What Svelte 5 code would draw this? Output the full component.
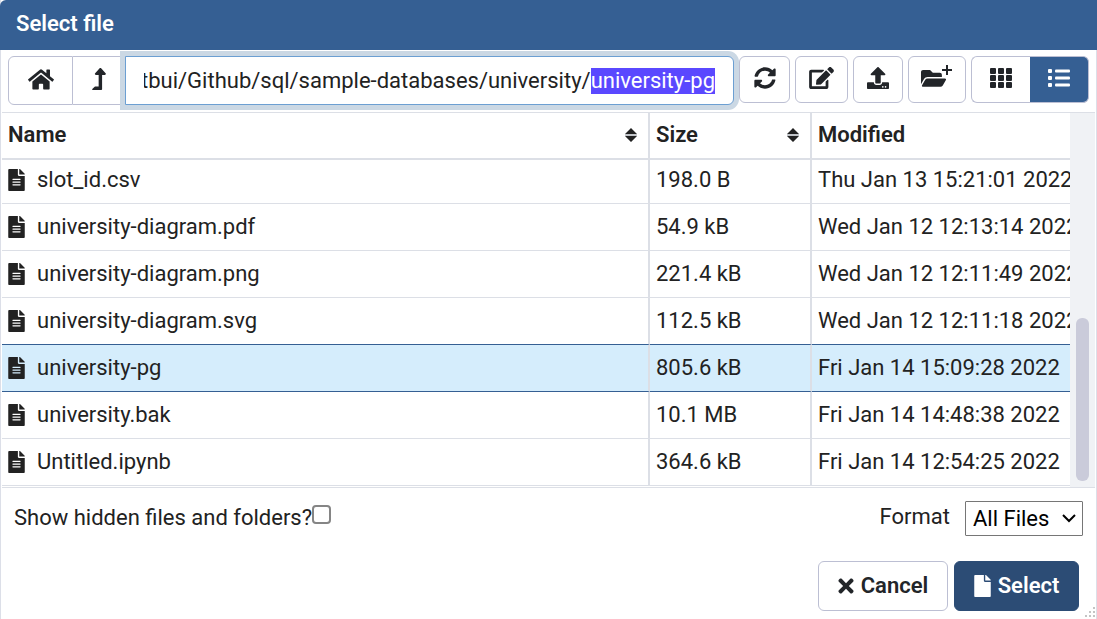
<script>
  import { onMount } from 'svelte';

  const files = [
    { name: 'slot_id.csv', size: '198.0 B', modified: 'Thu Jan 13 15:21:01 2022' },
    { name: 'university-diagram.pdf', size: '54.9 kB', modified: 'Wed Jan 12 12:13:14 2022' },
    { name: 'university-diagram.png', size: '221.4 kB', modified: 'Wed Jan 12 12:11:49 2022' },
    { name: 'university-diagram.svg', size: '112.5 kB', modified: 'Wed Jan 12 12:11:18 2022' },
    { name: 'university-pg', size: '805.6 kB', modified: 'Fri Jan 14 15:09:28 2022' },
    { name: 'university.bak', size: '10.1 MB', modified: 'Fri Jan 14 14:48:38 2022' },
    { name: 'Untitled.ipynb', size: '364.6 kB', modified: 'Fri Jan 14 12:54:25 2022' }
  ];
  const folder = 'tbui/Github/sql/sample-databases/university/';
  const syncArrow =
    'M370.72 133.28C339.458 104.008 298.888 87.962 255.848 88c-77.458.068-144.328 53.178-162.791 126.85-1.344 5.363-6.122 9.15-11.651 9.15H24.103c-7.498 0-13.194-6.807-11.807-14.176C33.933 94.924 134.813 8 256 8c66.448 0 126.791 26.136 171.315 68.685L463.03 40.97C478.149 25.851 504 36.559 504 57.941V192c0 13.255-10.745 24-24 24H345.941c-21.382 0-32.09-25.851-16.971-40.971l41.75-41.749z';

  let selected = $state('university-pg');
  let path = $state(folder + 'university-pg');
  let showHidden = $state(false);
  let pathInput;
  let list;

  onMount(() => {
    pathInput.focus();
    pathInput.setSelectionRange(folder.length, path.length);
    pathInput.scrollLeft = pathInput.scrollWidth;
    list.scrollTop = list.scrollHeight;
  });

  function pick(name) {
    selected = name;
    path = folder + name;
  }
</script>

{#snippet sorter()}
  <svg class="sorter" viewBox="0 0 12 14" aria-hidden="true"><path d="M6 0 12 6H0zM6 14 0 8h12z" /><path class="mid" d="M0 6h12v2H0z" /></svg>
{/snippet}

<div class="dialog">
  <header>Select file</header>

  <div class="toolbar">
    <div class="location">
      <button class="home" aria-label="Home">
        <svg width="26" height="23" viewBox="0 0 576 512"><path d="M280.37 148.26L96 300.11V464a16 16 0 0 0 16 16l112.06-.29a16 16 0 0 0 15.92-16V368a16 16 0 0 1 16-16h64a16 16 0 0 1 16 16v95.64a16 16 0 0 0 16 16.05L464 480a16 16 0 0 0 16-16V300L295.67 148.26a12.19 12.19 0 0 0-15.3 0zM571.6 251.47L488 182.56V44.05a12 12 0 0 0-12-12h-56a12 12 0 0 0-12 12v72.61L318.47 43a48 48 0 0 0-61 0L4.34 251.47a12 12 0 0 0-1.6 16.9l25.5 31A12 12 0 0 0 45.15 301l235.22-193.74a12.19 12.19 0 0 1 15.3 0L530.9 301a12 12 0 0 0 16.9-1.6l25.5-31a12 12 0 0 0-1.7-16.93z" /></svg>
      </button>
      <button class="up" aria-label="Go back">
        <svg width="14" height="22" viewBox="0 0 320 512"><path d="M313.553 119.669L209.587 7.666c-9.485-10.214-25.676-10.229-35.174 0L70.438 119.669C56.232 134.969 67.062 160 88.025 160H152v272H68.024a11.996 11.996 0 0 0-8.485 3.515l-56 56C-4.021 499.074 1.333 512 12.024 512H208c13.255 0 24-10.745 24-24V160h63.966c20.878 0 31.851-24.969 17.587-40.331z" /></svg>
      </button>
      <input bind:this={pathInput} bind:value={path} type="text" aria-label="Path" spellcheck="false" />
    </div>
    <button class="tool refresh" aria-label="Refresh">
      <svg width="22" height="22" viewBox="0 0 512 512"><path d={syncArrow} /><path d={syncArrow} transform="rotate(180 256 256)" /></svg>
    </button>
    <button class="tool rename" aria-label="Rename">
      <svg width="25" height="22" viewBox="0 0 576 512"><path d="M402.6 83.2l90.2 90.2c3.8 3.8 3.8 10 0 13.8L274.4 405.6l-92.8 10.3c-12.4 1.4-22.9-9.1-21.5-21.5l10.3-92.8L388.8 83.2c3.8-3.8 10-3.8 13.8 0zm162-22.9l-48.8-48.8c-15.2-15.2-39.9-15.2-55.2 0l-35.4 35.4c-3.8 3.8-3.8 10 0 13.8l90.2 90.2c3.8 3.8 10 3.8 13.8 0l35.4-35.4c15.2-15.3 15.2-40 0-55.2zM384 346.2V448H64V128h229.8c3.2 0 6.2-1.3 8.5-3.5l40-40c7.6-7.6 2.2-20.5-8.5-20.5H48C21.5 64 0 85.5 0 112v352c0 26.5 21.5 48 48 48h352c26.5 0 48-21.5 48-48V306.2c0-10.7-12.9-16-20.5-8.5l-40 40c-2.2 2.3-3.5 5.3-3.5 8.5z" /></svg>
    </button>
    <button class="tool" aria-label="Upload">
      <svg width="22" height="22" viewBox="0 0 512 512"><path d="M296 384h-80c-13.3 0-24-10.7-24-24V192h-87.7c-17.8 0-26.7-21.5-14.1-34.1L242.3 5.7c7.5-7.5 19.8-7.5 27.3 0l152.2 152.2c12.6 12.6 3.7 34.1-14.1 34.1H320v168c0 13.3-10.7 24-24 24zm216-8v112c0 13.3-10.7 24-24 24H24c-13.3 0-24-10.7-24-24V376c0-13.3 10.7-24 24-24h136v8c0 30.9 25.1 56 56 56h80c30.9 0 56-25.1 56-56v-8h136c13.3 0 24 10.7 24 24zm-124 88c0-11-9-20-20-20s-20 9-20 20 9 20 20 20 20-9 20-20zm64 0c0-11-9-20-20-20s-20 9-20 20 9 20 20 20 20-9 20-20z" /></svg>
    </button>
    <button class="tool folder" aria-label="New folder">
      <svg width="32" height="26" viewBox="0 0 32 26"><path transform="translate(0 2.300) scale(.0435)" d="M572.694 292.093L500.27 416.248A63.997 63.997 0 0 1 444.989 448H45.025c-18.523 0-30.064-20.093-20.731-36.093l72.424-124.155A64 64 0 0 1 152 256h399.964c18.523 0 30.064 20.093 20.73 36.093zM152 224h328v-48c0-26.51-21.49-48-48-48H272l-64-64H48C21.49 64 0 85.49 0 112v278.046l69.077-118.418C86.214 242.25 117.989 224 152 224z" /><path d="M25 0h2v4h4v2h-4v4h-2V6h-4V4h4z" /></svg>
    </button>
    <div class="views">
      <button aria-label="Grid view">
        <svg width="22" height="20" viewBox="0 0 22 20">{#each [0, 7, 14] as y}{#each [0, 8, 16] as x}<rect {x} {y} width="6" height="6" rx="1" />{/each}{/each}</svg>
      </button>
      <button class="on" aria-label="List view">
        <svg width="22" height="18" viewBox="0 0 22 18">{#each [0, 7, 14] as y}<rect {y} width="4" height="4" rx="1" /><rect x="7" y={y + 0.5} width="15" height="3" rx="1" />{/each}</svg>
      </button>
    </div>
  </div>

  <div class="files">
    <div class="list" bind:this={list}>
      <table>
        <colgroup><col /><col class="c-size" /><col class="c-mod" /></colgroup>
        <thead>
          <tr>
            <th><div>Name {@render sorter()}</div></th>
            <th><div>Size {@render sorter()}</div></th>
            <th><div>Modified</div></th>
          </tr>
        </thead>
        <tbody>
          {#each files as f}
            <tr class:selected={f.name === selected} onclick={() => pick(f.name)}>
              <td>
                <div class="name">
                  <svg width="17" height="22" viewBox="0 0 384 512"><path d="M224 136V0H24C10.7 0 0 10.7 0 24v464c0 13.3 10.7 24 24 24h336c13.3 0 24-10.7 24-24V160H248c-13.2 0-24-10.8-24-24zm64 236c0 6.6-5.4 12-12 12H108c-6.6 0-12-5.4-12-12v-8c0-6.6 5.4-12 12-12h168c6.6 0 12 5.4 12 12v8zm0-64c0 6.6-5.4 12-12 12H108c-6.6 0-12-5.4-12-12v-8c0-6.6 5.4-12 12-12h168c6.6 0 12 5.4 12 12v8zm0-72v8c0 6.6-5.4 12-12 12H108c-6.6 0-12-5.4-12-12v-8c0-6.6 5.4-12 12-12h168c6.6 0 12 5.4 12 12zm96-114.1v6.1H256V0h6.1c6.4 0 12.5 2.5 17 7l97.9 98c4.5 4.5 7 10.6 7 16.9z" /></svg>
                  {f.name}
                </div>
              </td>
              <td>{f.size}</td>
              <td>{f.modified}</td>
            </tr>
          {/each}
        </tbody>
      </table>
    </div>
    <div class="track"><div class="thumb"></div></div>
  </div>

  <div class="options">
    <div class="hidden-files">
      <label for="show-hidden">Show hidden files and folders?</label><input id="show-hidden" type="checkbox" bind:checked={showHidden} />
    </div>
    <div class="format">
      <label for="format">Format</label>
      <div class="select">
        <select id="format"><option>All Files</option></select>
        <svg width="14" height="9" viewBox="0 0 14 9" aria-hidden="true"><path d="M1 1l6 6 6-6" /></svg>
      </div>
    </div>
  </div>

  <footer>
    <button>
      <svg width="16" height="22" viewBox="0 0 352 512"><path d="M242.72 256l100.07-100.07c12.28-12.28 12.28-32.19 0-44.48l-22.24-22.24c-12.28-12.28-32.19-12.28-44.48 0L176 189.28 75.93 89.21c-12.28-12.28-32.19-12.28-44.48 0L9.21 111.45c-12.28 12.28-12.28 32.19 0 44.48L109.28 256 9.21 356.07c-12.28 12.28-12.28 32.19 0 44.48l22.24 22.24c12.28 12.28 32.2 12.28 44.48 0L176 322.72l100.07 100.07c12.28 12.28 32.2 12.28 44.48 0l22.24-22.24c12.28-12.28 12.28-32.19 0-44.48L242.72 256z" /></svg>
      Cancel
    </button>
    <button class="primary">
      <svg width="17" height="22" viewBox="0 0 384 512"><path d="M224 136V0H24C10.7 0 0 10.7 0 24v464c0 13.3 10.7 24 24 24h336c13.3 0 24-10.7 24-24V160H248c-13.2 0-24-10.8-24-24zm160-14.1v6.1H256V0h6.1c6.4 0 12.5 2.5 17 7l97.9 98c4.5 4.5 7 10.6 7 16.9z" /></svg>
      Select
    </button>
  </footer>
  <svg class="grip" width="12" height="12" viewBox="0 0 12 12" aria-hidden="true"><path d="M9 0h2v2H9zM5 4h2v2H5zM9 4h2v2H9zM1 8h2v2H1zM5 8h2v2H5zM9 8h2v2H9z" /></svg>
</div>

<style>
  :global(body) {
    margin: 0;
    background: #fff;
  }
  .dialog {
    position: relative;
    box-sizing: border-box;
    height: 100vh;
    display: flex;
    flex-direction: column;
    border-left: 1px solid #dcdfe8;
    border-right: 1px solid #dcdfe8;
    background: #fff;
    color: #222;
    font: 22px/26px Roboto, sans-serif;
  }
  svg {
    flex: none;
    fill: currentColor;
  }
  button,
  input,
  select {
    font: inherit;
    color: inherit;
    box-sizing: border-box;
    margin: 0;
  }
  button {
    display: flex;
    align-items: center;
    justify-content: center;
    background: #fff;
    border: 1px solid #bcbfd3;
    border-radius: 6px;
    padding: 0;
    color: #222529;
  }
  header {
    margin: 0 -1px;
    padding: 11px 16px 13px;
    background: #355f93;
    border-top-left-radius: 6px;
    color: #fff;
    font-weight: 600;
  }
  .toolbar {
    display: flex;
    align-items: flex-start;
    gap: 5px;
    padding: 6px 7px 7px;
  }
  .toolbar button {
    padding-bottom: 3px;
  }
  .location {
    flex: 1;
    display: flex;
    min-width: 0;
    height: 49px;
  }
  .home {
    width: 65px;
    border-radius: 6px 0 0 6px;
  }
  .up {
    width: 52px;
    border-left: 0;
    border-right: 0;
    border-radius: 0;
  }
  .location input {
    flex: 1;
    min-width: 0;
    border: 1px solid #6c9fd2;
    border-radius: 0 6px 6px 0;
    padding: 0 18px;
    background: #fff;
    outline: none;
    box-shadow: 0 0 0 5px #cbd8e4;
  }
  .location input::selection {
    background: #5a48ff;
    color: #fff;
  }
  .tool {
    width: 50px;
    height: 47px;
  }
  .refresh {
    width: 51px;
  }
  .rename {
    width: 53px;
  }
  .folder {
    width: 58px;
  }
  .views {
    display: flex;
    height: 47px;
  }
  .views button {
    width: 59px;
    border-right: 0;
    border-radius: 6px 0 0 6px;
  }
  .views .on {
    border: 1px solid #bcbfd3;
    border-left: 0;
    border-radius: 0 6px 6px 0;
    background: #355f93;
    color: #fff;
  }
  .files {
    flex: 1;
    min-height: 0;
    display: flex;
    margin: 0 1px;
    border-top: 1px solid #dcdfe6;
    border-bottom: 1px solid #dcdfe6;
  }
  .list {
    flex: 1;
    min-width: 0;
    overflow: hidden;
    padding-bottom: 1px;
  }
  table {
    width: 100%;
    table-layout: fixed;
    border-spacing: 0;
  }
  .c-size {
    width: 162px;
  }
  .c-mod {
    width: 258px;
  }
  th,
  td {
    box-sizing: border-box;
    height: 47px;
    padding: 0 6px;
    border-right: 2px solid #dcdfe6;
    border-bottom: 1px solid #dcdfe6;
    text-align: left;
    white-space: nowrap;
    overflow: hidden;
  }
  th {
    position: sticky;
    top: 0;
    background: #fff;
    border-bottom-width: 2px;
    padding: 0 11px 2px 6px;
    font-weight: 600;
  }
  th:last-child,
  td:last-child {
    border-right: 0;
    padding-right: 0;
  }
  th div {
    display: flex;
    align-items: center;
    justify-content: space-between;
  }
  .sorter {
    width: 12px;
    height: 14px;
  }
  .mid {
    fill: #c3c6ca;
  }
  .name {
    display: flex;
    align-items: center;
    gap: 12px;
  }
  .selected td {
    background: #d5edfc;
    border-bottom-color: #355f93;
  }
  tr:has(+ .selected) td {
    border-bottom-color: #355f93;
  }
  .track {
    flex: none;
    box-sizing: border-box;
    width: 25px;
    display: flex;
    flex-direction: column;
    justify-content: flex-end;
    padding: 6px;
    background: #f0f2f5;
  }
  .thumb {
    height: 45%;
    border-radius: 6px;
    background: #cacbda;
  }
  .options {
    display: flex;
    justify-content: space-between;
    padding: 13px 13px 0;
  }
  .hidden-files {
    display: flex;
    padding-top: 4px;
  }
  .hidden-files input {
    appearance: none;
    width: 19px;
    height: 19px;
    border: 2px solid #858585;
    border-radius: 4px;
    background: #fff;
  }
  .hidden-files input:checked {
    background: #355f93;
  }
  .format {
    display: flex;
    gap: 15px;
  }
  .format label {
    padding-top: 3px;
  }
  .select {
    display: grid;
    align-items: center;
  }
  .select select,
  .select svg {
    grid-area: 1 / 1;
  }
  .select select {
    appearance: none;
    width: 118px;
    height: 35px;
    padding: 0 7px;
    border: 1px solid #767676;
    border-radius: 1px;
    background: #fff;
    color: #000;
  }
  .select svg {
    justify-self: end;
    margin-right: 7px;
    fill: none;
    stroke: #000;
    stroke-width: 2;
    pointer-events: none;
  }
  footer {
    display: flex;
    justify-content: flex-end;
    gap: 6px;
    padding: 25px 17px 8px;
  }
  footer button {
    width: 130px;
    height: 50px;
    gap: 7px;
    padding-bottom: 1px;
    font-weight: 600;
  }
  footer .primary {
    width: 125px;
    background: #2c4c75;
    border-color: #2c4c75;
    color: #fff;
  }
  .grip {
    position: absolute;
    right: 0;
    bottom: 0;
    fill: #c4c4c4;
  }
</style>
